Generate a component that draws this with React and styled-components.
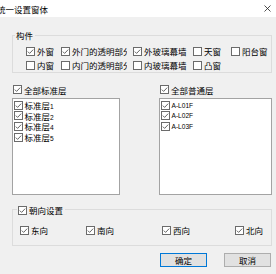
import React from "react";
import styled, { createGlobalStyle } from "styled-components";

const GlobalStyle = createGlobalStyle`
  html, body {
    margin: 0;
    padding: 0;
    background: #f0f0f0;
  }
  body {
    font-family: "Noto Sans CJK SC", "Liberation Sans", sans-serif;
  }
`;

const Window = styled.div`
  width: 276px;
  height: 274px;
  background: #f0f0f0;
  color: #000;
  font-size: 8.5px;
  overflow: hidden;
  display: flex;
  flex-direction: column;
`;

const TitleBar = styled.div`
  height: 17px;
  flex-shrink: 0;
  background: #fff;
  display: flex;
  align-items: center;
  justify-content: space-between;
  padding-right: 5px;
`;

const Title = styled.span`
  margin-left: -3px;
  white-space: nowrap;
`;

const Body = styled.div`
  padding: 0 4px 0 12px;
  display: flex;
  flex-direction: column;
`;

const Group = styled.div`
  position: relative;
  box-sizing: border-box;
  border: 1px solid #dcdcdc;
  margin-top: ${(p) => p.$top}px;
  height: ${(p) => p.$h}px;
`;

const Legend = styled.div`
  position: absolute;
  top: ${(p) => p.$top}px;
  left: ${(p) => p.$left}px;
  height: 10px;
  padding: 0 2px 0 1px;
  background: #f0f0f0;
  display: flex;
  align-items: center;
  gap: 2px;
  white-space: nowrap;
`;

const OptionGrid = styled.div`
  display: grid;
  grid-template-columns: ${(p) => p.$cols};
  grid-auto-rows: 14px;
  column-gap: ${(p) => p.$gap || 0}px;
  padding: ${(p) => p.$pad};
`;

const Option = styled.label`
  display: flex;
  align-items: center;
  gap: 2px;
  overflow: hidden;
  white-space: nowrap;
`;

const Box = styled.span`
  flex-shrink: 0;
  box-sizing: border-box;
  width: 9px;
  height: 9px;
  border: 1px solid #6b6b6b;
  background: #fff;
  display: inline-flex;
  align-items: center;
  justify-content: center;
`;

const Latin = styled.span`
  font-family: "Liberation Sans", sans-serif;
  font-size: 6.6px;
`;

const Lists = styled.div`
  margin-top: 11px;
  display: grid;
  grid-template-columns: 108px 1fr;
  column-gap: 39px;
`;

const ListColumn = styled.div`
  display: flex;
  flex-direction: column;
  gap: 3px;
`;

const ListHeader = styled.label`
  height: 11px;
  padding-left: 1px;
  display: flex;
  align-items: center;
  gap: 2px;
  white-space: nowrap;
`;

const ListBox = styled.div`
  box-sizing: border-box;
  height: 97px;
  background: #fff;
  border: 1px solid #a3a3a3;
  padding: 1px 0 0 1px;
`;

const ListItem = styled.label`
  height: 10.6px;
  display: flex;
  align-items: center;
  gap: 1.5px;
  white-space: nowrap;
`;

const Buttons = styled.div`
  margin-top: 7px;
  padding-right: 1px;
  display: flex;
  justify-content: flex-end;
  gap: 17px;
`;

const Button = styled.button`
  box-sizing: border-box;
  width: 47px;
  height: 14px;
  padding: 0;
  font: inherit;
  color: #000;
  background: #e1e1e1;
  border: 1px solid ${(p) => (p.$primary ? "#0078d7" : "#adadad")};
  display: flex;
  align-items: center;
  justify-content: center;
`;

const Check = ({ checked }) => (
  <Box>
    {checked && (
      <svg width="7" height="7" viewBox="0 0 7 7">
        <polyline
          points="0.8,3.6 2.6,5.4 6.2,1.6"
          fill="none"
          stroke="#555"
          strokeWidth="0.9"
        />
      </svg>
    )}
  </Box>
);

const CloseIcon = () => (
  <svg width="7" height="7" viewBox="0 0 7 7">
    <path d="M0.5 0.5 L6.5 6.5 M6.5 0.5 L0.5 6.5" stroke="#222" strokeWidth="0.8" />
  </svg>
);

const parts = [
  { label: "外窗", checked: true },
  { label: "外门的透明部分", checked: true },
  { label: "外玻璃幕墙", checked: true },
  { label: "天窗", checked: false },
  { label: "阳台窗", checked: false },
  { label: "内窗", checked: false },
  { label: "内门的透明部分", checked: false },
  { label: "内玻璃幕墙", checked: false },
  { label: "凸窗", checked: false },
];

const standardFloors = ["1", "2", "4", "5"];
const normalFloors = ["A-L01F", "A-L02F", "A-L03F"];
const directions = ["东向", "南向", "西向", "北向"];

export default function App() {
  return (
    <>
      <GlobalStyle />
      <Window>
        <TitleBar>
          <Title>统一设置窗体</Title>
          <CloseIcon />
        </TitleBar>
        <Body>
          <Group $top={18} $h={38}>
            <Legend $top={-6} $left={2}>构件</Legend>
            <OptionGrid $cols="29px 66px 54px 32px auto" $gap={6} $pad="8px 0 0 13px">
              {parts.map((p) => (
                <Option key={p.label}>
                  <Check checked={p.checked} />
                  {p.label}
                </Option>
              ))}
            </OptionGrid>
          </Group>

          <Lists>
            <ListColumn>
              <ListHeader>
                <Check checked />
                全部标准层
              </ListHeader>
              <ListBox>
                {standardFloors.map((n) => (
                  <ListItem key={n}>
                    <Check checked />
                    <span>
                      标准层<Latin>{n}</Latin>
                    </span>
                  </ListItem>
                ))}
              </ListBox>
            </ListColumn>
            <ListColumn>
              <ListHeader>
                <Check checked />
                全部普通层
              </ListHeader>
              <ListBox>
                {normalFloors.map((n) => (
                  <ListItem key={n}>
                    <Check checked />
                    <Latin>{n}</Latin>
                  </ListItem>
                ))}
              </ListBox>
            </ListColumn>
          </Lists>

          <Group $top={14} $h={37}>
            <Legend $top={-5} $left={4}>
              <Check checked />
              朝向设置
            </Legend>
            <OptionGrid $cols="66px 76px 73px auto" $pad="13px 0 0 7px">
              {directions.map((d) => (
                <Option key={d}>
                  <Check checked />
                  {d}
                </Option>
              ))}
            </OptionGrid>
          </Group>

          <Buttons>
            <Button $primary>确定</Button>
            <Button>取消</Button>
          </Buttons>
        </Body>
      </Window>
    </>
  );
}
